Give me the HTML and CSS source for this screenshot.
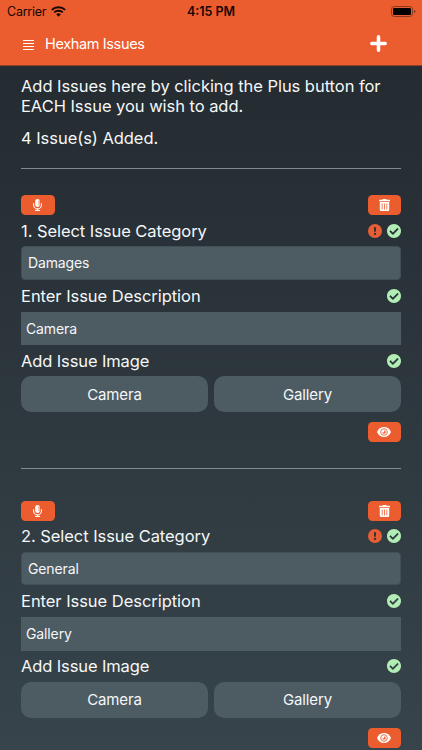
FILE: index.html
```html
<!DOCTYPE html>
<html lang="en">
<head>
<meta charset="utf-8">
<title>Hexham Issues</title>
<link rel="stylesheet" href="styles.css">
</head>
<body>
<svg class="sprite" aria-hidden="true">
  <symbol id="check" viewBox="8 8 496 496"><path d="M504 256c0 136.967-111.033 248-248 248S8 392.967 8 256 119.033 8 256 8s248 111.033 248 248zM227.314 387.314l184-184c6.248-6.248 6.248-16.379 0-22.627l-22.627-22.627c-6.248-6.249-16.379-6.249-22.628 0L216 308.118l-70.059-70.059c-6.248-6.248-16.379-6.248-22.628 0l-22.627 22.627c-6.248 6.248-6.248 16.379 0 22.627l104 104c6.249 6.249 16.379 6.249 22.628.001z"/></symbol>
  <symbol id="alert" viewBox="0 0 14 14"><circle cx="7" cy="7" r="7"/><path d="M5.9 3.2h2.2l-.25 4.6h-1.7z" fill="#2a3238"/><circle cx="7" cy="9.9" r="1.15" fill="#2a3238"/></symbol>
  <symbol id="mic" viewBox="0 0 9 12"><rect x="2.2" width="4.6" height="8" rx="2.3"/><path d="M.6 4.6v1.3a3.9 3.9 0 0 0 7.8 0V4.6M4.5 9.8v1.6M2.500 11.4h4" fill="none" stroke="#fff" stroke-width="1.1" stroke-linecap="round"/><path d="M5 2.3h1.8M5 3.8h1.8M5 5.3h1.8" stroke="#eb5d2f" stroke-width=".6"/></symbol>
  <symbol id="trash" viewBox="0 0 11 12"><path d="M.4.8h3L3.8 0h3.4l.4.8h3q.4 0 .4.4v1H0v-1Q0 .8.4.8zM.8 3h9.4v7.8q0 1.2-1.2 1.2H2Q.8 12 .8 10.8z"/><path d="M3.2 4.5v6M5.5 4.5v6M7.8 4.5v6" stroke="#eb5d2f" stroke-width=".8"/></symbol>
  <symbol id="eye" viewBox="0 0 14 10"><path d="M0 5C1.5 1.8 4 0 7 0s5.500 1.800 7 5c-1.500 3.200-4 5-7 5S1.500 8.200 0 5z"/><circle cx="7" cy="5" r="3.300" fill="none" stroke="#eb5d2f" stroke-width=".9"/><path d="M7 3.300A1.700 1.700 0 1 1 5.300 5 1.200 1.200 0 0 0 7 3.300z" fill="#eb5d2f"/></symbol>
</svg>

<header class="header">
  <div class="status">
    <div class="carrier"><span class="carrier-name">Carrier</span>
      <svg class="wifi" viewBox="0 0 15 11"><path d="M.8 3.900a9.500 9.500 0 0 1 13.400 0M3.200 6.400a6.100 6.100 0 0 1 8.600 0" fill="none" stroke="#160704" stroke-width="2"/><path d="M5.200 8.300a3.300 3.300 0 0 1 4.600 0L7.500 10.700z" fill="#160704"/></svg>
    </div>
    <span class="time">4:15 PM</span>
    <svg class="battery" viewBox="0 0 25 11"><rect x=".5" y=".5" width="21" height="10" rx="2.800" fill="none" stroke="#8b391e"/><rect x="2" y="2" width="18" height="7" rx="1.300" fill="#000"/><path d="M23 3.700q1.500.5 1.500 1.800T23 7.300z" fill="#8b391e"/></svg>
  </div>
  <div class="nav">
    <svg class="menu" viewBox="0 0 11 10"><path d="M0 .5h11M0 3.500h11M0 6.500h11M0 9.500h11" stroke="#fff" stroke-width="1.200"/></svg>
    <h1 class="title">Hexham Issues</h1>
    <svg class="plus" viewBox="0 0 17 17"><path d="M8.500 1.800v13.400M1.800 8.500h13.400" stroke="#fff" stroke-width="3.500" stroke-linecap="round"/></svg>
  </div>
</header>

<main class="content">
  <p class="intro">Add Issues here by clicking the Plus button for<br>EACH Issue you wish to add.</p>
  <p class="count">4 Issue(s) Added.</p>
  <hr class="rule">

  <section class="issue">
    <div class="tools">
      <button class="tool"><svg class="i-mic"><use href="#mic"/></svg></button>
      <button class="tool"><svg class="i-trash"><use href="#trash"/></svg></button>
    </div>
    <div class="row row-category"><span class="label category">1. Select Issue Category</span><span class="marks"><svg class="mark alert"><use href="#alert"/></svg><svg class="mark"><use href="#check"/></svg></span></div>
    <div class="field select">Damages</div>
    <div class="row row-description"><span class="label">Enter Issue Description</span><svg class="mark"><use href="#check"/></svg></div>
    <div class="field input">Camera</div>
    <div class="row row-image"><span class="label image">Add Issue Image</span><svg class="mark"><use href="#check"/></svg></div>
    <div class="sources"><button class="source">Camera</button><button class="source">Gallery</button></div>
    <div class="preview"><button class="tool"><svg class="i-eye"><use href="#eye"/></svg></button></div>
  </section>
  <hr class="rule divider">

  <section class="issue">
    <div class="tools">
      <button class="tool"><svg class="i-mic"><use href="#mic"/></svg></button>
      <button class="tool"><svg class="i-trash"><use href="#trash"/></svg></button>
    </div>
    <div class="row row-category"><span class="label category">2. Select Issue Category</span><span class="marks"><svg class="mark alert"><use href="#alert"/></svg><svg class="mark"><use href="#check"/></svg></span></div>
    <div class="field select">General</div>
    <div class="row row-description"><span class="label">Enter Issue Description</span><svg class="mark"><use href="#check"/></svg></div>
    <div class="field input">Gallery</div>
    <div class="row row-image"><span class="label image">Add Issue Image</span><svg class="mark"><use href="#check"/></svg></div>
    <div class="sources"><button class="source">Camera</button><button class="source">Gallery</button></div>
    <div class="preview"><button class="tool"><svg class="i-eye"><use href="#eye"/></svg></button></div>
  </section>
</main>
</body>
</html>
```
FILE: styles.css
```css
* { box-sizing: border-box; }
body {
  margin: 0;
  width: 422px;
  height: 750px;
  overflow: hidden;
  display: flex;
  flex-direction: column;
  color: #f5f7f8;
  background: linear-gradient(#242b31 65px, #37444b 750px);
  font-family: Inter, "Liberation Sans", sans-serif;
}
h1, p { margin: 0; font-weight: 400; }
svg { display: block; flex: none; }
button { border: 0; margin: 0; padding: 0; color: inherit; font: inherit; }
.sprite { display: none; }

.header { height: 66px; flex: none; background: #eb5d2f; border-bottom: 1px solid #8f4129; }
.status { height: 22px; display: grid; grid-template-columns: 1fr auto 1fr; align-items: center; padding: 0 6px 0 7px; color: #160704; }
.carrier { display: flex; align-items: center; gap: 5px; font-size: 12.5px; letter-spacing: -.25px; }
.wifi { width: 15px; height: 11px; }
.time { font-size: 12.5px; font-weight: 600; margin-left: -1px; }
.battery { width: 25px; height: 11px; justify-self: end; }
.nav { height: 43px; display: flex; align-items: center; padding: 0 35px 0 23px; color: #fff; }
.menu { width: 11px; height: 10px; margin-top: 3px; }
.title { font-size: 14.5px; letter-spacing: -.36px; margin-left: 11px; margin-top: -1px; }
.plus { width: 17px; height: 17px; margin: -1px 0 0 auto; }

.content { padding: 9.5px 21px 0; }
.intro, .count { font-size: 16.5px; line-height: 20.5px; letter-spacing: -.045px; white-space: nowrap; }
.count { margin-top: 11px; }
.rule { height: 1px; margin: 20px 0 26px; border: 0; background: #828b90; }
.divider { margin: 25.5px 0 32px; }

.tools { display: flex; justify-content: space-between; }
.tool { width: 33.5px; height: 20px; border-radius: 4.5px; background: #eb5d2f; display: flex; align-items: center; justify-content: center; fill: #fff; }
.i-mic { width: 9px; height: 12px; }
.i-trash { width: 11px; height: 12px; }
.i-eye { width: 14px; height: 10px; }
.row { display: flex; align-items: center; justify-content: space-between; }
.row-category { height: 31.4px; }
.row-description { height: 31.7px; }
.row-image { height: 31px; }
.label { font-size: 16.5px; line-height: 20px; letter-spacing: -.04px; }
.category { letter-spacing: -.06px; }
.image { letter-spacing: -.12px; }
.marks { display: flex; gap: 5px; }
.mark { width: 14px; height: 14px; fill: #b1edb5; }
.alert { fill: #e85e34; }
.field { height: 33.5px; background: #4d5b63; font-size: 14px; line-height: 33.5px; padding: 0 5px; letter-spacing: -.12px; }
.select { border: 1px solid #424f57; border-radius: 4px; padding: 0 6px; line-height: 31.5px; }
.sources { display: flex; gap: 6px; }
.source { flex: 1; height: 36px; border-radius: 10px; background: #4d5b63; font-size: 15px; letter-spacing: -.15px; }
.preview { display: flex; justify-content: flex-end; margin-top: 10px; }
```
